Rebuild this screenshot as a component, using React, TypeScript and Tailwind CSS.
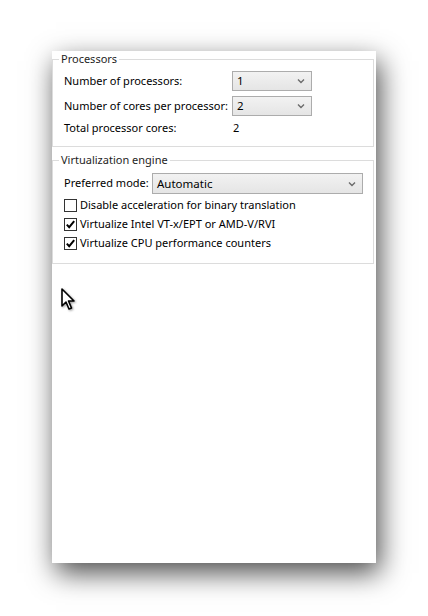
import React from 'react';

const font = { fontFamily: '"Noto Sans", "Open Sans", Arial, sans-serif' };

function Chevron() {
  return (
    <svg width="8" height="6" viewBox="0 0 8 6" className="shrink-0">
      <path d="M1 1.5 L4 4.5 L7 1.5" fill="none" stroke="#6b6b6b" strokeWidth="1.4" />
    </svg>
  );
}

function Select({ value, width, height = 20 }: { value: string; width: string; height?: number }) {
  return (
    <div
      className={`${width} flex shrink-0 items-center justify-between border border-[#acacac] bg-gradient-to-b from-[#f2f2f2] to-[#e5e5e5] pl-[4px] pr-[6px] text-[11.5px] text-black`}
      style={{ height }}
    >
      <span>{value}</span>
      <Chevron />
    </div>
  );
}

function Checkbox({ checked, label }: { checked: boolean; label: string }) {
  return (
    <div className="flex h-[19px] items-center">
      <div className="flex h-[13px] w-[13px] shrink-0 items-center justify-center border border-[#333] bg-white">
        {checked && (
          <svg width="11" height="11" viewBox="0 0 11 11">
            <path d="M1.8 5.6 L4.2 8.2 L9.2 2.2" fill="none" stroke="#000" strokeWidth="2" />
          </svg>
        )}
      </div>
      <span className="ml-[3px] whitespace-nowrap text-[11px] text-black">{label}</span>
    </div>
  );
}

function Cursor() {
  return (
    <svg width="16" height="24" viewBox="0 0 16 24" className="absolute left-[61px] top-[288px]" style={{ filter: 'drop-shadow(1px 1px 1px rgba(0,0,0,0.4))' }}>
      <path d="M1 1 L1 18 L5 14 L8 21 L10.5 20 L7.5 13 L13 13 Z" fill="#fff" stroke="#000" strokeWidth="1.6" strokeLinejoin="round" />
    </svg>
  );
}

export default function App() {
  return (
    <div className="relative h-[616px] w-[428px] overflow-hidden bg-white pl-[52px] pt-[52px]" style={font}>
      {/* settings panel */}
      <div className="h-[512px] w-[324px] bg-white shadow-[4px_10px_26px_rgba(0,0,0,0.7)]">
        <fieldset className="-mt-px mr-[2px] border border-[#dcdcdc] pb-[11px] pl-[11px] pr-[8px]">
          <legend className="-ml-[5px] px-[2px] text-[11px] leading-4 text-[#1e1e1e]">Processors</legend>
          <div className="flex flex-col gap-[5px] pt-[4px] text-[11px] text-black">
            <div className="flex h-[20px] items-center">
              <span className="w-[168px] whitespace-nowrap">Number of processors:</span>
              <Select value="1" width="w-[80px]" />
            </div>
            <div className="flex h-[20px] items-center">
              <span className="w-[168px] whitespace-nowrap">Number of cores per processor:</span>
              <Select value="2" width="w-[80px]" />
            </div>
            <div className="flex h-[14px] items-center">
              <span className="w-[169px] whitespace-nowrap">Total processor cores:</span>
              <span>2</span>
            </div>
          </div>
        </fieldset>

        <fieldset className="mr-[2px] mt-[5px] border border-[#dcdcdc] pb-[10px] pl-[11px] pr-[10px]">
          <legend className="-ml-[5px] px-[2px] text-[11px] leading-4 text-[#1e1e1e]">Virtualization engine</legend>
          <div className="pt-[5px]">
            <div className="flex h-[21px] items-center text-[11px] text-black">
              <span className="w-[88px] whitespace-nowrap">Preferred mode:</span>
              <Select value="Automatic" width="w-[211px]" height={21} />
            </div>
            <div className="mt-[2px] flex flex-col">
              <Checkbox checked={false} label="Disable acceleration for binary translation" />
              <Checkbox checked label="Virtualize Intel VT-x/EPT or AMD-V/RVI" />
              <Checkbox checked label="Virtualize CPU performance counters" />
            </div>
          </div>
        </fieldset>
      </div>
      <Cursor />
    </div>
  );
}
